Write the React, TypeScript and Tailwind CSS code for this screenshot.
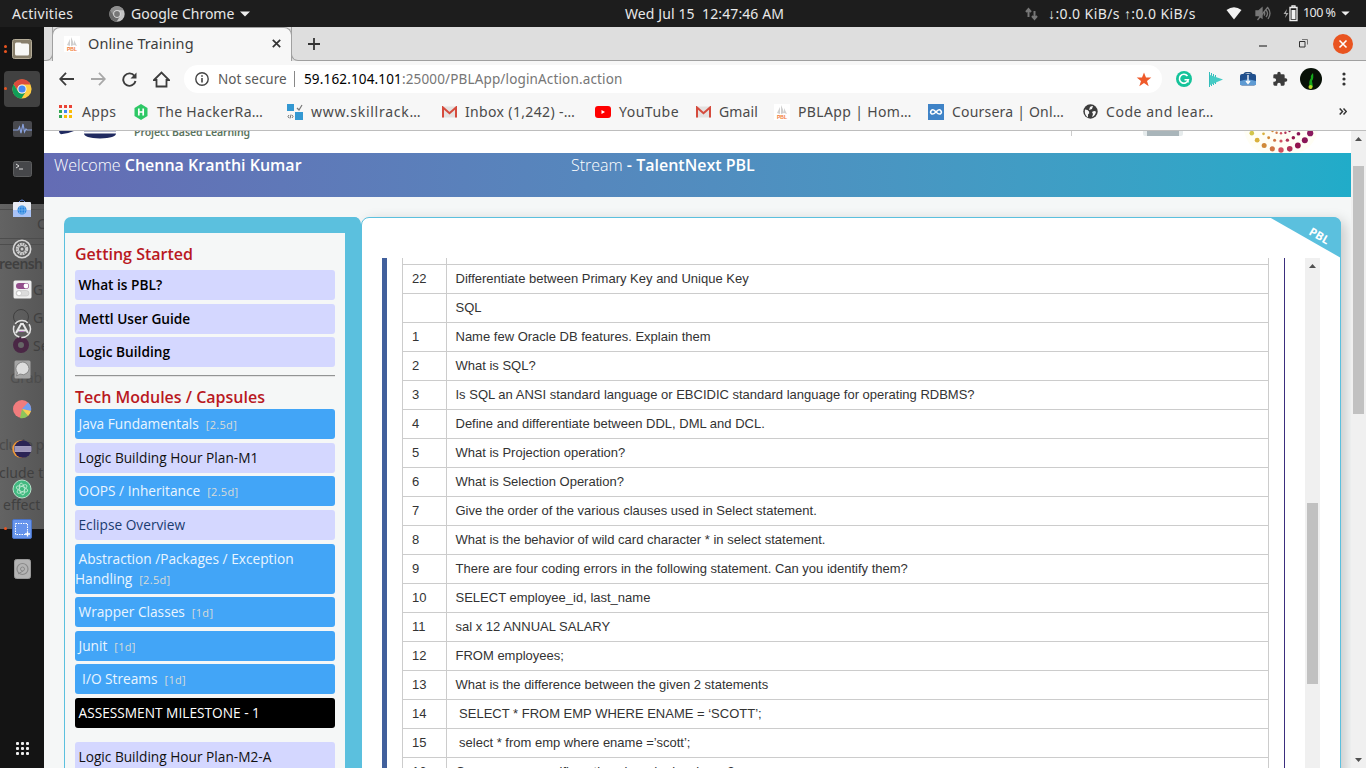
import React from "react";

const UI = "font-['Noto_Sans',sans-serif]";

function Chrome({ size, gray }: { size: number; gray?: boolean }) {
  const c = gray ? ["#8e8e8e", "#6a6a6a", "#c4c4c4", "#777", "#ddd"] : ["#dd4b3e", "#109d58", "#ffcd42", "#4688f4", "#f1f1f1"];
  return (
    <svg width={size} height={size} viewBox="0 0 20 20">
      <circle cx="10" cy="10" r="9.6" fill={c[2]} />
      <path d="M1.6 5.2A9.6 9.6 0 0 1 18.4 5.4H10A4.6 4.6 0 0 0 5.9 12.3Z" fill={c[0]} />
      <path d="M1.6 5.2A9.6 9.6 0 0 0 9.5 19.6L13.9 12.4A4.6 4.6 0 0 1 6 12.3Z" fill={c[1]} />
      <circle cx="10" cy="10" r="4.6" fill={c[4]} />
      <circle cx="10" cy="10" r="3.6" fill={c[3]} />
    </svg>
  );
}

function TopBar() {
  return (
    <header className={`flex h-[27px] w-full shrink-0 items-center bg-[#1d1d1d] text-[14px] text-[#e8e8e8] ${UI}`}>
      <span className="ml-[12px] w-[97px] whitespace-nowrap tracking-[0.3px]">Activities</span>
      <Chrome size={16} gray />
      <span className="ml-[6px] w-[109px] whitespace-nowrap">Google Chrome</span>
      <svg width="10" height="6" viewBox="0 0 10 6"><path d="M0 .5h10L5 5.5z" fill="#eee" /></svg>
      <span className="ml-[375px] w-[400px] whitespace-pre tracking-[0.1px]">Wed Jul 15  12:47:46 AM</span>
      <svg width="13" height="14" viewBox="0 0 13 14" fill="none" stroke="#777" strokeWidth="2"><path d="M3.500 10V3M1 5l2.500-3L6 5M9.500 4v7M7 9l2.500 3L12 9" /></svg>
      <span className="ml-[10px] w-[167px] whitespace-nowrap tracking-[0.4px]">↓:0.0 KiB/s ↑:0.0 KiB/s</span>
      <svg className="ml-[11px]" width="16" height="13" viewBox="0 0 16 13"><path d="M.5 3Q8-2.500 15.500 3L8 12.500z" fill="#f2f2f2" /></svg>
      <svg className="ml-[13px]" width="16" height="15" viewBox="0 0 16 15" fill="none" stroke="#777" strokeWidth="1.300"><path d="M1 5h2.500L7 2v10L3.500 9.500H1z" fill="#777" /><path d="M9 5.500q1.500 2 0 4M11 4q3 3.500 0 7M13 2q4 5 0 11M2.500 14L13 1" /></svg>
      <svg className="ml-[12px]" width="16" height="17" viewBox="0 0 16 17"><path d="M4 4L.5 9H3l-1 4 3.500-5H3z" fill="#aaa" /><path d="M9 2V.8h3V2M7 2.500h7v13H7z" fill="none" stroke="#eee" strokeWidth="1.300" /><path d="M8.500 5h4v9h-4z" fill="#f2f2f2" /></svg>
      <span className="ml-[4px] w-[35px] whitespace-nowrap text-[12.5px] tracking-[-0.55px]">100 %</span>
      <svg className="ml-[3px]" width="9" height="5" viewBox="0 0 10 6"><path d="M0 .5h10L5 5.500z" fill="#eee" /></svg>
    </header>
  );
}

const dockIcons: React.ReactNode[] = [
  <svg width="20" height="20" viewBox="0 0 20 20"><rect x=".5" y=".5" width="19" height="19" rx="2" fill="#887f6b" stroke="#b5ad99" /><path d="M3 5q0-1.500 1.500-1.500h4l1 1h6q1.500 0 1.500 1.500v9q0 1.500-1.500 1.500h-11Q3 16.500 3 15z" fill="#f8f8f6" /></svg>,
  <Chrome size={20} />,
  <svg width="19" height="16" viewBox="0 0 19 16"><rect width="19" height="16" rx="2" fill="#48494e" /><path d="M0 9h5l1.500-3L8 12l2-9 1.500 8L13 8l1 1h5" fill="none" stroke="#88a0dc" strokeWidth="1.200" /></svg>,
  <svg width="19" height="16" viewBox="0 0 19 16"><rect x=".5" y=".5" width="18" height="15" rx="2" fill="#46474a" stroke="#5c5d5e" /><path d="M3 3l3 2-3 2M6 8h4" fill="none" stroke="#ddd" strokeWidth="1" /></svg>,
  <svg width="20" height="20" viewBox="0 0 20 20"><path d="M7 3q3-4 6 0" fill="none" stroke="#5f82d8" /><rect x="1" y="3" width="18" height="15" rx="1" fill="#e9ecf5" /><path d="M1 11h18v7H1z" fill="#a9c3f7" /><circle cx="10" cy="11" r="4.500" fill="#2381df" /><path d="M5.500 11h9M10 6.500v9M7 8h6M7 14h6M8 7q-2 4 0 8M12 7q2 4 0 8" fill="none" stroke="#8ec2f3" strokeWidth=".6" /></svg>,
  <svg width="20" height="20" viewBox="0 0 20 20" fill="none"><circle cx="10" cy="10" r="8.700" stroke="#d5d5d5" strokeWidth="1.600" /><circle cx="10" cy="10" r="5" stroke="#ccc" strokeWidth="2.500" strokeDasharray="2 .6" /><circle cx="10" cy="10" r="3.600" stroke="#ccc" /><circle cx="10" cy="10" r="1.500" fill="#ccc" /></svg>,
  <svg width="19" height="19" viewBox="0 0 19 19"><rect x=".5" y=".5" width="18" height="18" rx="1.500" fill="#f0f0f0" /><rect x="3" y="3" width="13" height="6" rx="3" fill="#924d8b" /><circle cx="13" cy="6" r="2.400" fill="#fff" /><rect x="3" y="10.500" width="13" height="5.500" rx="2.750" fill="#dcdcdc" stroke="#bbb" strokeWidth=".5" /><circle cx="6" cy="13.200" r="2.500" fill="#fff" stroke="#aaa" strokeWidth=".5" /></svg>,
  <svg width="20" height="20" viewBox="0 0 20 20" fill="none"><circle cx="10" cy="10" r="8.500" stroke="#e2e2e2" strokeWidth="1.500" strokeDasharray="14 2" /><path d="M4 14L9 5h2l5 9M5 11.500h9" stroke="#e8e8e8" strokeWidth="2" /><path d="M7 12.500h5" stroke="#b47abf" /></svg>,
  <svg width="17" height="19" viewBox="0 0 17 19"><rect x=".5" y=".5" width="16" height="18" rx="1.500" fill="#a5a5a5" /><path d="M2.500 16l1-3Q0 8 4 4q5-4 9 0 4 5 0 9-3 3-7 1z" fill="#dedede" stroke="#777" strokeWidth=".8" /></svg>,
  <svg width="20" height="20" viewBox="0 0 20 20"><circle cx="10" cy="10" r="9" fill="#f17c7d" /><path d="M10 10l6-6.500a9 9 0 0 1 3 8.500z" fill="#729fef" /><path d="M10 10l9 2q-1 3-3 5z" fill="#f4d051" /><path d="M10 10l6 7q-4 3-8 2z" fill="#8bc75a" /></svg>,
  <svg width="20" height="20" viewBox="0 0 20 20"><circle cx="9" cy="10" r="8.700" fill="#f29a36" /><circle cx="10.800" cy="10" r="8.700" fill="#2b2455" /><path d="M2.500 7h16.600l.4 2v2l-.5 2H2.600z" fill="#a39cbd" /><path d="M2.300 9h17M2.300 11h17" stroke="#8c85ad" strokeWidth=".5" /></svg>,
  <svg width="20" height="20" viewBox="0 0 20 20" fill="none"><circle cx="10" cy="10" r="9" fill="#42b981" stroke="#b8e3cc" /><g stroke="#c4ecd6" strokeWidth=".8"><ellipse cx="10" cy="10" rx="6" ry="2.500" transform="rotate(20 10 10)" /><ellipse cx="10" cy="10" rx="6" ry="2.500" transform="rotate(80 10 10)" /><ellipse cx="10" cy="10" rx="6" ry="2.500" transform="rotate(140 10 10)" /></g></svg>,
  <svg width="20" height="20" viewBox="0 0 20 20" fill="none"><rect x=".5" y=".5" width="19" height="19" rx="1.500" fill="#6694ec" stroke="#4971c2" /><rect x="3.500" y="4.500" width="12" height="11" stroke="#fff" strokeDasharray="1.500 1" /><path d="M15.500 12.500v5M13 15h5" stroke="#fff" strokeWidth="1.300" /></svg>,
  <svg width="17" height="20" viewBox="0 0 17 20" fill="none"><rect x=".5" y=".5" width="16" height="19" rx="2" fill="#b4b4b4" stroke="#999" /><circle cx="8.500" cy="10" r="5.500" stroke="#8a8a8a" strokeWidth="1.200" /><circle cx="8.500" cy="10" r="2" stroke="#8a8a8a" /><path d="M4 15l5-3" stroke="#888" /></svg>,
];

function Dock() {
  const ghost = "absolute whitespace-nowrap text-[#404040]";
  return (
    <aside className={`relative flex w-[44px] shrink-0 flex-col overflow-hidden bg-[#141414] pt-[2px] ${UI}`}>
      <div className="absolute left-0 top-[177px] h-[325px] w-[44px] overflow-hidden bg-linear-to-r from-[#636363] to-[#575757] text-[14px]">
        <div className="absolute top-[5px] h-px w-full bg-[#4d4d4d]" />
        <div className="absolute top-[34px] h-px w-full bg-[#4d4d4d]" />
        <div className="absolute top-[40px] h-px w-full bg-[#4d4d4d]" />
        <span className={`${ghost} left-[37px] top-[9px]`}>C</span>
        <span className={`${ghost} -left-[1px] top-[49px] font-semibold tracking-[-0.6px]`}>reensh</span>
        <span className={`${ghost} left-[33px] top-[75px]`}>G</span>
        <span className={`${ghost} left-[33px] top-[103px]`}>G</span>
        <span className={`${ghost} left-[33px] top-[131px]`}>Se</span>
        <div className="absolute left-[13px] top-[105px] h-[16px] w-[16px] rounded-full border border-[#404040]" />
        <div className="absolute left-[13px] top-[133px] h-[16px] w-[16px] rounded-full border-[5px] border-[#4a2745] bg-[#666]" />
        <span className={`${ghost} left-[10px] top-[163px] opacity-50`}>Grab</span>
        <span className={`${ghost} -left-[1px] top-[230px] tracking-[-0.4px] opacity-70`}>clude p</span>
        <span className={`${ghost} -left-[1px] top-[258px]`}>clude t</span>
        <span className={`${ghost} left-[3px] top-[290px]`}>effect</span>
      </div>
      {dockIcons.map((icon, i) => (
        <div key={i} className="relative flex h-[40px] shrink-0 items-center justify-center">
          {i === 1 && <div className="absolute left-[4px] top-[2px] h-[36px] w-[36px] rounded-[4px] bg-[#414141]" />}
          {i === 0 && <div className="absolute left-[4px] top-[16px] h-[3px] w-[3px] rounded-full bg-[#e95420] shadow-[0_5px_0_#e95420]" />}
          {(i === 1 || i === 12) && <div className="absolute left-[4px] top-[18px] h-[3px] w-[3px] rounded-full bg-[#e95420]" />}
          <div className="relative">{icon}</div>
        </div>
      ))}
      <div className="relative mt-[153px] grid grid-cols-3 gap-[2px] self-center">
        {Array.from({ length: 9 }, (_, i) => <div key={i} className="h-[3px] w-[3px] rounded-[1px] bg-[#eee]" />)}
      </div>
    </aside>
  );
}

function PblIcon() {
  return (
    <svg width="16" height="16" viewBox="0 0 16 16"><path d="M0 0h16v16H0z" fill="#fff" /><path d="M3 9l3-6v7zM7 10V1q2 4 3 8zM10 9V4l3 6z" fill="#cfcfcf" /><text x="3" y="15" fontSize="5" fontWeight="700" fill="#f27b39" fontFamily="Liberation Sans">PBL</text></svg>
  );
}

function Gmail() {
  return <svg width="15" height="12" viewBox="0 0 15 12"><path d="M0 .5h15v11H0z" fill="#e4e2e1" /><path d="M1 11.500V1.500l6.500 5.700L14 1.500v10" fill="none" stroke="#d54b3d" strokeWidth="2" /></svg>;
}

function TabStrip() {
  return (
    <div className="flex h-[34px] shrink-0 bg-[#dedede]">
      <div className="flex w-[9px] flex-col"><div className="flex-1 rounded-br-[7px] border-b border-r border-[#a0a0a0]" /></div>
      <div className={`-ml-px flex w-[240px] items-center rounded-t-[8px] border-x border-t border-[#a0a0a0] bg-[#f7f7f7] pb-[2px] text-[14.5px] text-[#3c3c3c] ${UI}`}>
        <div className="ml-[11px] flex"><PblIcon /></div>
        <span className="ml-[8px] w-[184px] whitespace-nowrap tracking-[0.1px]">Online Training</span>
        <svg width="9" height="9" viewBox="0 0 9 9"><path d="M.8.8l7.400 7.400M8.200.8L.8 8.200" stroke="#333" strokeWidth="1.700" /></svg>
      </div>
      <div className="-ml-px flex flex-1 items-center rounded-bl-[7px] border-b border-l border-[#a0a0a0]">
        <svg className="ml-[16px]" width="12" height="12" viewBox="0 0 12 12"><path d="M6 0v12M0 6h12" stroke="#333" strokeWidth="1.800" /></svg>
        <svg className="ml-[939px]" width="8" height="9" viewBox="0 0 8 9"><path d="M0 7h8" stroke="#333" strokeWidth="1.200" /></svg>
        <svg className="ml-[32px]" width="9" height="9" viewBox="0 0 9 9" fill="none"><path d="M.5 2.500h5.500v5.500H.5z" stroke="#333" /><path d="M3 .5h5.500v5" stroke="#777" /></svg>
        <svg className="ml-[25px]" width="20" height="20" viewBox="0 0 20 20"><circle cx="10" cy="10" r="10" fill="#e95420" /><path d="M6.500 6.500l7 7M13.500 6.500l-7 7" stroke="#fff" strokeWidth="1.600" /></svg>
      </div>
    </div>
  );
}

function Toolbar() {
  return (
    <div className={`flex h-[36px] shrink-0 items-center bg-[#f7f7f7] text-[13.5px] ${UI}`}>
      <svg className="ml-[15px]" width="15" height="14" viewBox="0 0 15 14" fill="none" stroke="#3c3c3c" strokeWidth="1.800"><path d="M7 .8L1.200 7 7 13.200M1.200 7H15" /></svg>
      <svg className="ml-[17px]" width="15" height="14" viewBox="0 0 15 14" fill="none" stroke="#a8a8a8" strokeWidth="1.800"><path d="M8 .8L13.800 7 8 13.200M13.800 7H0" /></svg>
      <svg className="ml-[16px]" width="15" height="15" viewBox="0 0 15 15"><path d="M12.500 4A6.200 6.200 0 1 0 13.500 9" fill="none" stroke="#3c3c3c" strokeWidth="1.900" /><path d="M14.500.5v6h-6z" fill="#3c3c3c" /></svg>
      <svg className="ml-[16px]" width="17" height="17" viewBox="0 0 17 17" fill="none" stroke="#3c3c3c" strokeWidth="1.800"><path d="M1 9l7.500-7.500L16 9h-2.500v6.500h-10V9z" /></svg>
      <div className="ml-[14px] flex h-[28px] w-[978px] items-center rounded-full bg-white">
        <svg className="ml-[11px]" width="14" height="14" viewBox="0 0 14 14" fill="none"><circle cx="7" cy="7" r="6.200" stroke="#444" strokeWidth="1.400" /><path d="M7 6v4.500M7 3.200v1.600" stroke="#444" strokeWidth="1.600" /></svg>
        <span className="ml-[9px] w-[76px] whitespace-nowrap text-[#5a5a5a]">Not secure</span>
        <div className="h-[16px] w-px bg-[#888]" />
        <span className="ml-[9px] w-[832px] whitespace-nowrap tracking-[0.15px] text-[#767676]"><span className="text-black">59.162.104.101</span>:25000/PBLApp/loginAction.action</span>
        <svg width="16" height="15" viewBox="0 0 16 15"><path d="M8 .5l2 5h5.300L11 9l1.700 5.300L8 11l-4.700 3.300L5 9 .7 5.500H6z" fill="#ef5a2a" /></svg>
      </div>
      <svg className="ml-[14px]" width="16" height="16" viewBox="0 0 16 16" fill="none"><circle cx="8" cy="8" r="8" fill="#15c39a" /><path d="M11.500 5A4.500 4.500 0 1 0 12.300 8.800H8.500M12 9v2.500" stroke="#fff" strokeWidth="1.600" /></svg>
      <svg className="ml-[16px]" width="15" height="15" viewBox="0 0 15 15"><path d="M1 0v15h1V0zM3 1v13h1V1zM5 2v11h1V2zM7 3v9h1V3z" fill="#35bdbb" /><path d="M2 3l13 4.500L2 13z" fill="#46cbc5" /></svg>
      <svg className="ml-[17px]" width="16" height="14" viewBox="0 0 16 14"><path d="M4 3q0-2.500 4-2.500T12 3" fill="none" stroke="#234d80" strokeWidth="1.500" /><rect y="2" width="16" height="11.500" rx="2" fill="#1f4f8d" /><path d="M0 9q8-3 16 0v4H0z" fill="#5f9bd3" /><path d="M8 3v8M6 9l2 2.500L10 9" stroke="#fff" strokeWidth="1.300" fill="none" /></svg>
      <svg className="ml-[16px]" width="16" height="16" viewBox="0 0 24 24"><path fill="#3c3c3c" d="M20.500 11H19V7a2 2 0 0 0-2-2h-4V3.500a2.500 2.500 0 0 0-5 0V5H4a2 2 0 0 0-2 2v3.800h1.500a2.700 2.700 0 0 1 0 5.400H2V20a2 2 0 0 0 2 2h3.800v-1.500a2.700 2.700 0 0 1 5.400 0V22H17a2 2 0 0 0 2-2v-4h1.500a2.500 2.500 0 0 0 0-5z" /></svg>
      <svg className="ml-[12px]" width="22" height="22" viewBox="0 0 22 22"><circle cx="11" cy="11" r="11" fill="#071006" /><path d="M13 5q-3 3-2 5-3 4-1 9h3l-1-6q2-3 1-8z" fill="#15a51b" /><circle cx="10.500" cy="19" r="2" fill="#b9d725" /></svg>
      <svg className="ml-[20px]" width="4" height="14" viewBox="0 0 4 14" fill="#333"><circle cx="2" cy="2" r="1.600" /><circle cx="2" cy="7" r="1.600" /><circle cx="2" cy="12" r="1.600" /></svg>
    </div>
  );
}

const appColors = ["#ea4335", "#ea4335", "#ea4335", "#34a853", "#4285f4", "#fbbc05", "#34a853", "#fbbc05", "#fbbc05"];

const bookmarks: [React.ReactNode, string, string, string][] = [
  [<svg width="14" height="14" viewBox="0 0 14 14">{appColors.map((c, i) => <rect key={i} x={(i % 3) * 5} y={Math.floor(i / 3) * 5} width="3" height="3" fill={c} />)}</svg>, "Apps", "w-[75px]", "tracking-[0.4px]"],
  [<svg width="16" height="16" viewBox="0 0 16 16"><path d="M8 0l6.500 4v8L8 16l-6.500-4V4z" fill="#2ec866" /><path d="M5.800 4.500v7M10.200 4.500v7M5.800 8h4.400" stroke="#fff" strokeWidth="1.700" /></svg>, "The HackerRa…", "w-[154px]", "tracking-[0.35px]"],
  [<svg width="16" height="16" viewBox="0 0 16 16"><path d="M0 0h7v7H0zM8 8h8v8H8z" fill="#3398d2" /><path d="M10 4l2 2 3-5" fill="none" stroke="#777" strokeWidth="1.200" /><path d="M2 11l-1 1.500L2 14M5 11l1 1.500L5 14M4 10.500l-1 4" fill="none" stroke="#555" strokeWidth=".8" /></svg>, "www.skillrack…", "w-[154px]", "tracking-[0.75px]"],
  [<Gmail />, "Inbox (1,242) -…", "w-[154px]", "tracking-[0.35px]"],
  [<svg width="16" height="12" viewBox="0 0 16 12"><rect width="16" height="12" rx="3" fill="#f00" /><path d="M6.500 4v4l3.500-2z" fill="#fff" /></svg>, "YouTube", "w-[100px]", "tracking-[0.5px]"],
  [<Gmail />, "Gmail", "w-[79px]", "tracking-[0.1px]"],
  [<PblIcon />, "PBLApp | Hom…", "w-[154px]", "tracking-[0.35px]"],
  [<svg width="16" height="16" viewBox="0 0 16 16" fill="none"><path d="M0 0h16v16H0z" fill="#3f83c7" /><path d="M8 8Q5 4.500 3.300 6.500q-1.500 2 0 3.200Q5 11 8 8q3-3.500 4.700-1.500 1.500 2 0 3.200Q11 11 8 8z" stroke="#fff" strokeWidth="1.500" /></svg>, "Coursera | Onl…", "w-[154px]", "tracking-[0.2px]"],
  [<svg width="15" height="15" viewBox="0 0 15 15"><circle cx="7.500" cy="7.500" r="7.200" fill="#3c3c3c" /><path d="M2 5.500q3 0 4 2t-1 3l0 3Q1 11 2 5.500zM7 3q1-1 3-1l-1 3-3 1zM9 8q3-2 4 0-1 4-4 5l1-3z" fill="#f7f7f7" /></svg>, "Code and lear…", "w-[150px]", "tracking-[0.55px]"],
];

function Bookmarks() {
  return (
    <div className={`flex h-[34px] shrink-0 items-center border-b border-[#bdbdbd] bg-[#f7f7f7] pb-[4px] pl-[13px] text-[14px] text-[#4a4a4a] ${UI}`}>
      {bookmarks.map(([icon, label, width, track]) => (
        <div key={label} className={`flex shrink-0 items-center ${width}`}>
          <div className="flex w-[18px] justify-center">{icon}</div>
          <span className={`ml-[7px] whitespace-nowrap ${track}`}>{label}</span>
        </div>
      ))}
      <svg className="ml-[108px]" width="8" height="7" viewBox="0 0 8 7" fill="none" stroke="#333" strokeWidth="1.500"><path d="M.7.5l2.800 3-2.800 3M4.500.5l2.800 3-2.800 3" /></svg>
    </div>
  );
}

const ringColors = ["#c9b93f", "#d2c54b", "#d9b13c", "#d08a38", "#cf7545", "#cf4f5f", "#b03257", "#93154d", "#8a1656", "#8b195e", "#6e4a80"];

function SiteHeader() {
  return (
    <div className="flex h-[22px] shrink-0 overflow-hidden bg-white">
      <svg className="ml-[12px] shrink-0" width="72" height="10" viewBox="0 0 72 10"><path d="M3 0h15q-7 3-13 3.300-2-1-2-3.300zM28 2.500h32Q60 7 44 7.500 28 7 28 2.500z" fill="#202a60" /><path d="M28 0h32v1H28z" fill="#b9bdd2" /></svg>
      <span className="-mt-[7px] ml-[6px] w-[937px] whitespace-nowrap font-['Noto_Sans',sans-serif] text-[10.5px] font-semibold leading-[16px] tracking-[-0.08px] text-[#5b7460]">Project Based Learning</span>
      <div className="h-[5px] w-px bg-[#ccc]" />
      <div className="ml-[71px] h-[5px] w-[40px] rounded-b-[2px] bg-[#e6ebec] px-[4px]"><div className="h-[5px] bg-[#a9b5ba]" /></div>
      <svg className="ml-[59px]" width="80" height="22" viewBox="0 0 80 22">
        <path d="M2 0h74q-6 20-22 22H22Q6 18 2 0z" fill="#fffef5" />
        {ringColors.map((c, i) => {
          const a = ((i - 5) * 15 * Math.PI) / 180;
          return (
            <g key={i} fill={c}>
              <circle cx={39 + 33.7 * Math.sin(a)} cy={-14.7 + 33.7 * Math.cos(a)} r={2.2 + i * 0.1} />
              <circle cx={39 + 24.7 * Math.sin(a)} cy={-14.7 + 24.7 * Math.cos(a)} r={1.2 + i * 0.08} />
              <circle cx={39 + 17 * Math.sin(a)} cy={-14.7 + 17 * Math.cos(a)} r="1.2" />
            </g>
          );
        })}
      </svg>
    </div>
  );
}

type Item = [string, string, string, string];
const violet = "bg-[#d4d7ff] text-[#111]";
const blue = "bg-[#42a5f7] text-[#eaf5ff]";
const modules: Item[] = [
  ["Java Fundamentals", "[2.5d]", blue, "h-[30px]"],
  ["Logic Building Hour Plan-M1", "", violet, "mt-[4px] h-[30px]"],
  ["OOPS / Inheritance", "[2.5d]", blue, "mt-[3px] h-[30px]"],
  ["Eclipse Overview", "", "bg-[#d4d7ff] text-[#1b3c70]", "mt-[4px] h-[30px]"],
  ["Abstraction /Packages / Exception Handling", "[2.5d]", blue, "mt-[4px] h-[50px]"],
  ["Wrapper Classes", "[1d]", blue, "mt-[3px] h-[30px]"],
  ["Junit", "[1d]", blue, "mt-[4px] h-[30px]"],
  ["\u00a0I/O Streams", "[1d]", blue, "mt-[3px] h-[30px]"],
  ["ASSESSMENT MILESTONE - 1", "", "bg-black text-white", "mt-[4px] h-[30px]"],
  ["Logic Building Hour Plan-M2-A", "", violet, "mt-[14px] h-[30px]"],
];

function Sidebar() {
  return (
    <nav className="relative z-10 h-[700px] w-[297px] shrink-0 rounded-t-[7px] border-l border-r-[16px] border-t-[16px] border-[#5bc0de] bg-[#f5f7f7] pl-[10px] pr-[10px] pt-[10px] font-['Open_Sans',sans-serif] text-[13.7px]">
      <h2 className="h-[27px] text-[16px] font-semibold leading-[22px] text-[#b9191f]">Getting Started</h2>
      {[["What is PBL?", ""], ["Mettl User Guide", "mt-[4px]"], ["Logic Building", "mt-[3px]"]].map(([t, m]) => (
        <div key={t} className={`h-[30px] rounded-[3px] bg-[#d4d7ff] pl-[3.5px] font-semibold leading-[30px] text-black ${m}`}>{t}</div>
      ))}
      <div className="mt-[8px] h-[2px] border-t border-[#929494] bg-[#e3e3e3]" />
      <h2 className="mt-[9px] h-[23px] text-[16px] font-semibold leading-[22px] text-[#b9191f]">Tech Modules / Capsules</h2>
      {modules.map(([t, d, color, box]) => (
        <div key={t} className={`rounded-[3px] pt-[5px] indent-[3.5px] leading-[20px] ${color} ${box}`}>
          {t}{d && <span className="ml-[7px] text-[11px] tracking-[0.3px] text-[#d9dcd8]">{d}</span>}
        </div>
      ))}
    </nav>
  );
}

const rows: [string, string][] = [
  ["22", "Differentiate between Primary Key and Unique Key"],
  ["", "SQL"],
  ["1", "Name few Oracle DB features. Explain them"],
  ["2", "What is SQL?"],
  ["3", "Is SQL an ANSI standard language or EBCIDIC standard language for operating RDBMS?"],
  ["4", "Define and differentiate between DDL, DML and DCL."],
  ["5", "What is Projection operation?"],
  ["6", "What is Selection Operation?"],
  ["7", "Give the order of the various clauses used in Select statement."],
  ["8", "What is the behavior of wild card character * in select statement."],
  ["9", "There are four coding errors in the following statement. Can you identify them?"],
  ["10", "SELECT employee_id, last_name"],
  ["11", "sal x 12 ANNUAL SALARY"],
  ["12", "FROM employees;"],
  ["13", "What is the difference between the given 2 statements"],
  ["14", " SELECT * FROM EMP WHERE ENAME = ‘SCOTT’;"],
  ["15", " select * from emp where ename =’scott’;"],
  ["16", "Can you use specific options in order by clause?"],
];

function MainPanel() {
  return (
    <main className="relative flex h-[700px] w-[980px] shrink-0 rounded-t-[8px] border border-[#5bc0de] bg-white pl-[20px] pt-[40px] shadow-[4px_4px_14px_rgba(0,0,0,0.2)]">
      <svg className="absolute -right-px -top-px" width="72" height="41" viewBox="0 0 72 41">
        <path d="M0 0H64Q72 0 72 8V41z" fill="#5bc0de" />
        <text x="39" y="17" transform="rotate(30 39 17)" fontSize="11.5" fontWeight="700" fontFamily="Open Sans" fill="#fff">PBL</text>
      </svg>
      <div className="flex w-[903px] border-l-[5px] border-r border-l-[#41609c] border-r-[#3b2e7e] pl-[15px]">
        <div className="w-[867px] font-['Liberation_Sans',sans-serif] text-[13px] leading-[28px] text-[#333]">
          <div className="flex h-[6px] border-x border-[#ccc]"><div className="w-[44px] border-r border-[#ccc]" /></div>
          {rows.map(([n, q]) => (
            <div key={n + q} className="flex h-[29px] border-x border-t border-[#ccc]">
              <div className="w-[44px] border-r border-[#ccc] pl-[9px]">{n}</div>
              <div className="whitespace-pre pl-[8.5px]">{q}</div>
            </div>
          ))}
        </div>
      </div>
      <div className="ml-[20px] flex w-[15px] flex-col items-center bg-[#f0f0f0]">
        <svg className="mt-[6px]" width="7" height="4" viewBox="0 0 7 4"><path d="M0 4h7L3.500 0z" fill="#505050" /></svg>
        <div className="mt-[235px] h-[181px] w-[11px] bg-[#c1c1c1]" />
      </div>
    </main>
  );
}

export default function App() {
  return (
    <div className="flex h-[768px] w-[1366px] flex-col overflow-hidden">
      <TopBar />
      <div className="flex h-[741px]">
        <Dock />
        <div className="flex w-[1322px] flex-col">
          <TabStrip />
          <Toolbar />
          <Bookmarks />
          <div className="flex h-[637px]">
            <div className="flex w-[1307px] flex-col overflow-hidden bg-[#f5f7f7]">
              <SiteHeader />
              <div className="flex h-[44px] shrink-0 bg-linear-to-r from-[#646cb4] to-[#20acc9] pl-[10px] font-['Open_Sans',sans-serif] text-[16px] leading-[24px] text-white">
                <span className="w-[517px] whitespace-nowrap font-light">Welcome <b className="font-semibold">Chenna Kranthi Kumar</b></span>
                <span className="whitespace-nowrap font-light">Stream <b className="font-semibold">- TalentNext PBL</b></span>
              </div>
              <div className="flex pl-[20px] pt-[20px]">
                <Sidebar />
                <MainPanel />
              </div>
            </div>
            <div className="flex w-[15px] flex-col items-center bg-[#f0f0f0]">
              <svg className="mt-[6px]" width="7" height="4" viewBox="0 0 7 4"><path d="M0 4h7L3.500 0z" fill="#505050" /></svg>
              <div className="mt-[25px] h-[248px] w-[11px] bg-[#c1c1c1]" />
              <svg className="mb-[6px] mt-auto" width="7" height="4" viewBox="0 0 7 4"><path d="M0 0h7L3.500 4z" fill="#505050" /></svg>
            </div>
          </div>
        </div>
      </div>
    </div>
  );
}
